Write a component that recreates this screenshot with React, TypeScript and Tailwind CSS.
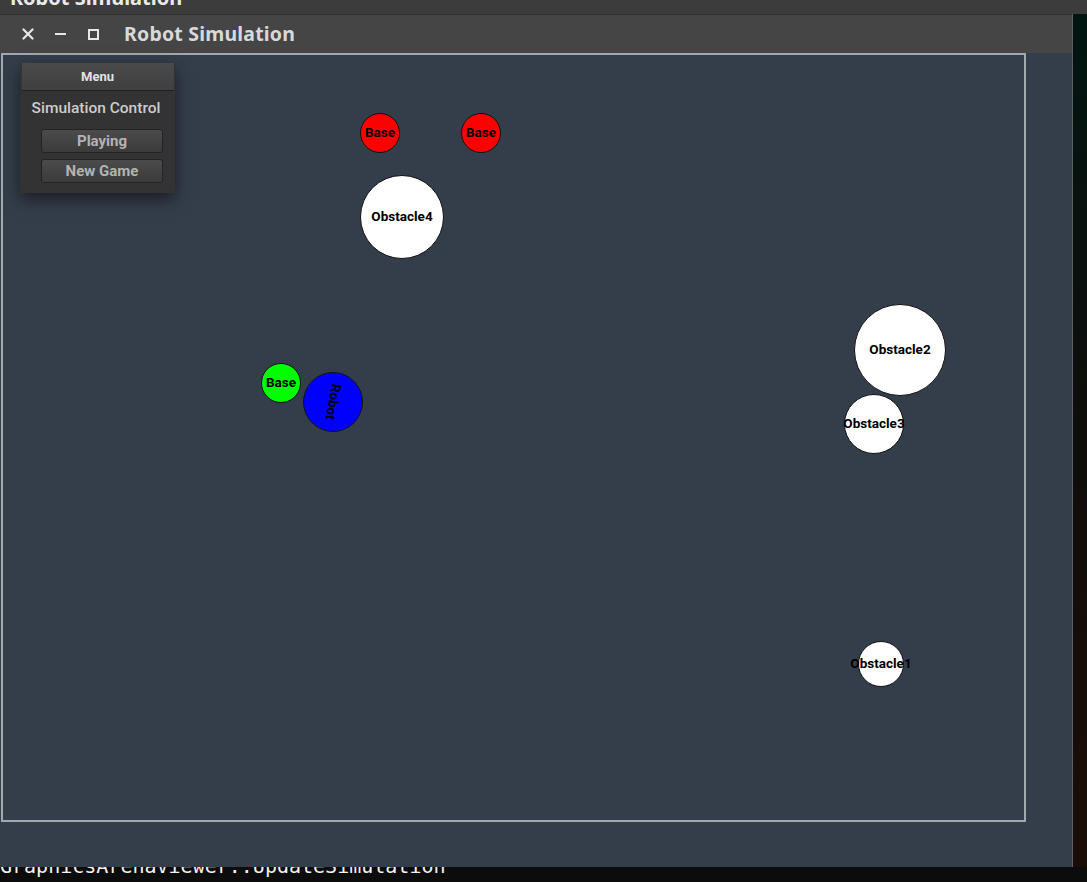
import React from "react";

type Ent = { x: number; y: number; r: number; fill: string; label: string; rot?: number };

const ents: Ent[] = [
  { x: 380, y: 133, r: 20, fill: "#ff0000", label: "Base" },
  { x: 481, y: 133, r: 20, fill: "#ff0000", label: "Base" },
  { x: 402, y: 217, r: 42, fill: "#ffffff", label: "Obstacle4" },
  { x: 281, y: 383, r: 20, fill: "#00ff00", label: "Base" },
  { x: 333, y: 402, r: 30, fill: "#0000ff", label: "Robot", rot: 100 },
  { x: 900, y: 350, r: 46, fill: "#ffffff", label: "Obstacle2" },
  { x: 874, y: 424, r: 30, fill: "#ffffff", label: "Obstacle3" },
  { x: 881, y: 664, r: 23, fill: "#ffffff", label: "Obstacle1" },
];

export default function App() {
  return (
    <div className="w-[1087px] h-[882px] overflow-hidden bg-[#0b0d0c] flex flex-col" style={{ fontFamily: "Roboto, sans-serif" }}>
      {/* top strip */}
      <div className="h-[14px] bg-[#3c3c3c] overflow-hidden shrink-0">
        <div className="mt-[-17px] ml-[10px] text-[20px] font-bold text-[#eaeaea]" style={{ fontFamily: "'Noto Sans', sans-serif" }}>
          Robot Simulation
        </div>
      </div>
      <div className="flex h-[853px] shrink-0">
        {/* window */}
        <div className="w-[1073px] flex flex-col border-r border-[#5a5f66] bg-[#343e4a]">
          <div className="h-[39px] bg-[#454545] border-t border-[#2f2f2f] flex items-center shrink-0">
            <svg width="12" height="12" viewBox="0 0 12 12" className="ml-[22px] shrink-0">
              <path d="M1.5 1.5 L10.5 10.5 M10.5 1.5 L1.5 10.5" stroke="#e8e8e8" strokeWidth="2.2" strokeLinecap="round" />
            </svg>
            <div className="ml-[21px] w-[11px] h-[2px] bg-[#e8e8e8] shrink-0" />
            <div className="ml-[22px] w-[11px] h-[11px] border-[2.5px] border-[#e8e8e8] shrink-0" />
            <div className="ml-[25px] text-[19.5px] font-bold text-[#d9d9d9] tracking-[0.2px]" style={{ fontFamily: "'Noto Sans', sans-serif" }}>
              Robot Simulation
            </div>
          </div>
          <div className="flex-1 relative">
            {/* arena */}
            <div className="absolute left-[1px] top-0 w-[1025px] h-[769px] border-2 border-[#a3a8ad]" />
            {ents.map((e, i) => (
              <div
                key={i}
                className="absolute rounded-full border border-[#111] flex items-center justify-center"
                style={{ left: e.x - e.r, top: e.y - 53 - e.r, width: e.r * 2, height: e.r * 2, background: e.fill }}
              >
                <span
                  className="text-[13.5px] font-bold text-black whitespace-nowrap leading-none"
                  style={{ transform: e.rot ? `rotate(${e.rot}deg)` : undefined }}
                >
                  {e.label}
                </span>
              </div>
            ))}
            {/* menu */}
            <div className="absolute left-[20px] top-[10px] w-[155px] h-[130px] bg-[#333333] shadow-[0_6px_16px_rgba(0,0,0,0.55)] flex flex-col items-center">
              <div className="w-[152px] h-[28px] bg-gradient-to-b from-[#4a4a4a] to-[#3f3f3f] border-b border-[#1f1f1f] flex items-center justify-center text-[13px] font-bold text-[#e2e2e2]">
                Menu
              </div>
              <div className="mt-[7px] mr-[3px] text-[15.5px] font-medium text-[#cccccc] leading-[20px]">Simulation Control</div>
              <div className="mt-[11px] ml-[9px] w-[122px] h-[24px] rounded-[3px] border border-[#232323] bg-gradient-to-b from-[#4b4b4b] to-[#3b3b3b] flex items-center justify-center text-[15px] font-bold text-[#b3b3b3]">
                Playing
              </div>
              <div className="mt-[6px] ml-[9px] w-[122px] h-[24px] rounded-[3px] border border-[#232323] bg-gradient-to-b from-[#4b4b4b] to-[#3b3b3b] flex items-center justify-center text-[15px] font-bold text-[#b3b3b3]">
                New Game
              </div>
            </div>
          </div>
        </div>
        {/* right strip */}
        <div className="flex-1 bg-gradient-to-b from-[#021510] via-[#0e0d0c] to-[#1a0d08]" />
      </div>
      {/* terminal */}
      <div className="h-[15px] overflow-hidden bg-[#0c0c0c] shrink-0">
        <div className="mt-[-13px] text-[20px] text-[#f2f2f2] leading-[24px]" style={{ fontFamily: "'DejaVu Sans Mono', monospace" }}>
          GraphicsArenaViewer::UpdateSimulation
        </div>
      </div>
    </div>
  );
}
